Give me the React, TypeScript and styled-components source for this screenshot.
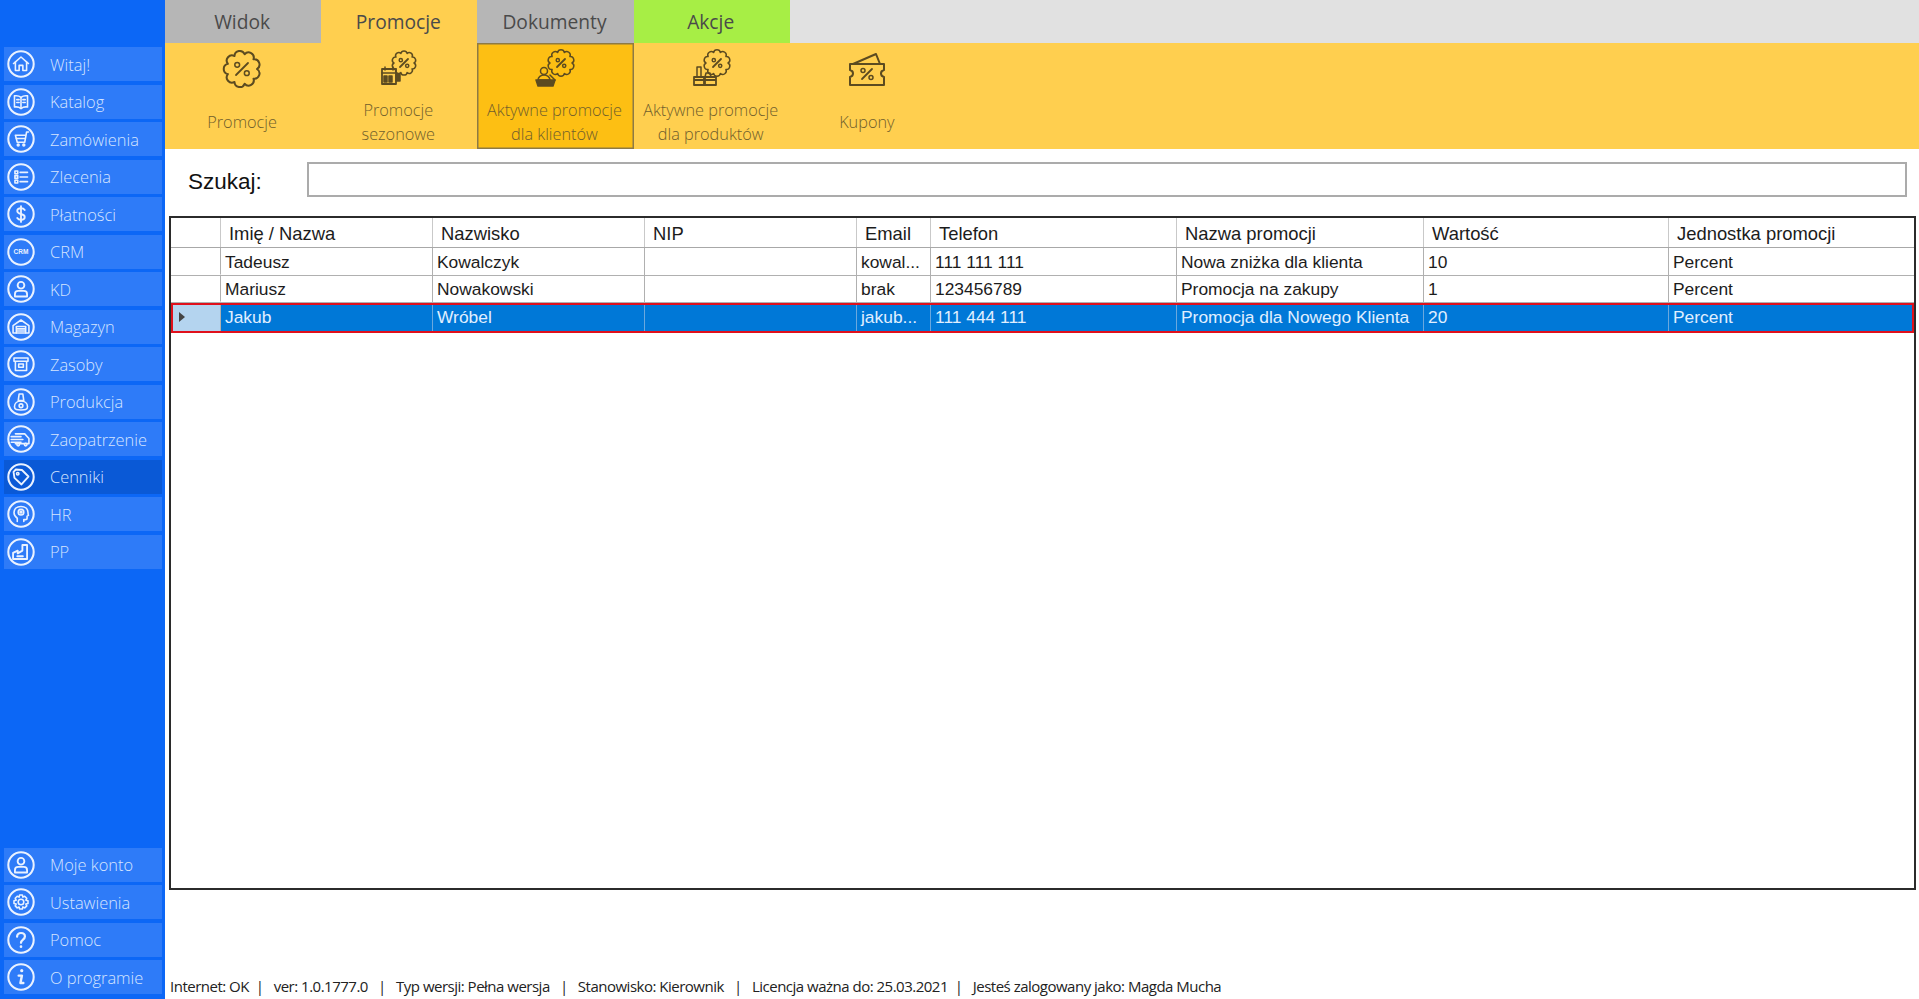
import React from 'react';
import styled, { createGlobalStyle } from 'styled-components';

const GlobalStyle = createGlobalStyle`
  html, body {
    margin: 0;
    padding: 0;
    background: #fff;
  }
  body {
    font-family: 'Open Sans', 'Noto Sans', sans-serif;
    overflow: hidden;
  }
`;

const Shell = styled.div`
  display: flex;
  width: 1919px;
  height: 999px;
`;

/* ---------- sidebar ---------- */

const Sidebar = styled.nav`
  width: 165px;
  flex: none;
  box-sizing: border-box;
  padding: 47px 3px 5px 4px;
  background: #0c67f6;
  display: flex;
  flex-direction: column;
  justify-content: space-between;
`;

const NavGroup = styled.div`
  display: flex;
  flex-direction: column;
  gap: 3.5px;
`;

const NavItem = styled.a<{ $active?: boolean }>`
  height: 34px;
  display: flex;
  align-items: center;
  gap: 8px;
  padding-left: 3px;
  background: ${p => (p.$active ? '#0a59d6' : '#2e7bf8')};
  color: #d6e5ff;
  font-size: 16.4px;
  font-weight: 300;
  white-space: nowrap;

  svg {
    flex: none;
    width: 28px;
    height: 28px;
  }
`;

const NavLabel = styled.span`
  margin-left: 7px;
`;

const round = {
  fill: 'none',
  stroke: '#eaf2ff',
  strokeWidth: 1.7,
  strokeLinecap: 'round',
  strokeLinejoin: 'round',
} as const;

const NavIcon: React.FC<{ children: React.ReactNode }> = ({ children }) => (
  <svg viewBox="0 0 30 30">
    <circle cx="15" cy="15" r="13.6" fill="none" stroke="#eaf2ff" strokeWidth="2.2" />
    <g {...round}>{children}</g>
  </svg>
);

const navIcons: Record<string, React.ReactNode> = {
  home: (
    <>
      <path d="M7 14.5 15 7.5l8 7" />
      <path d="M9 13v9h4v-5.5h4V22h4v-9" />
    </>
  ),
  book: (
    <>
      <path d="M15 10c-2-1.6-4.5-2-7-1.6v12c2.5-.4 5 0 7 1.6 2-1.6 4.5-2 7-1.6v-12c-2.5-.4-5 0-7 1.6Z" />
      <path d="M15 10v12M10.5 12.5h2.5M10.5 15.5h2.5M17 12.5h2.5M17 15.5h2.5" />
    </>
  ),
  cart: (
    <>
      <path d="M23 7.5h-2l-2 11h-8L9 11h11" />
      <path d="M10 14.5h9.5" />
      <circle cx="12" cy="21.5" r="1" />
      <circle cx="18" cy="21.5" r="1" />
    </>
  ),
  list: (
    <>
      <rect x="8.5" y="8.5" width="3" height="3" />
      <rect x="8.5" y="13.5" width="3" height="3" />
      <rect x="8.5" y="18.5" width="3" height="3" />
      <path d="M14 10h8M14 15h8M14 20h8" />
    </>
  ),
  dollar: (
    <>
      <path d="M19 10.8c-.8-1.3-2.2-2-4-2-2.4 0-4 1.2-4 3s1.6 2.6 4 3.2 4 1.4 4 3.2-1.6 3-4 3c-1.8 0-3.2-.7-4-2" strokeWidth="2" />
      <path d="M15 6.5v17" strokeWidth="2" />
    </>
  ),
  user: (
    <>
      <circle cx="15" cy="11" r="3.6" strokeWidth="2" />
      <path d="M8.5 23v-2.5c0-2 1.5-3.5 3.5-3.5h6c2 0 3.5 1.5 3.5 3.5V23Z" strokeWidth="2" />
    </>
  ),
  warehouse: (
    <>
      <path d="M6.5 13.5 15 7.5l8.5 6v8h-17Z" />
      <path d="M10 21.5v-7h10v7M10 17h10M10 19.3h10" />
    </>
  ),
  archive: (
    <>
      <path d="M7.5 8.5h15V12h-15ZM9 12v10h12V12" />
      <path d="M12.5 15h5v3.5h-5Z" />
    </>
  ),
  machine: (
    <>
      <path d="M13 6.5h4l1 7h-6Z" />
      <path d="M8 20c0-3.5 3-6 7-6s7 2.5 7 6-3 3.5-7 3.5-7 0-7-3.5Z" />
      <circle cx="15" cy="19" r="2" />
    </>
  ),
  truck: (
    <>
      <path d="M9 9.5h10l4.5 5V20H9" />
      <path d="M4.5 12.5H15M4.5 15.5H17M4.5 18.5H15" />
      <circle cx="12" cy="21" r="1.4" />
      <circle cx="20" cy="21" r="1.4" />
    </>
  ),
  tag: (
    <>
      <path d="M7 9.5 9.5 7l6.5.5 7 7-7.5 8.5-7.5-7Z" strokeWidth="2" />
      <circle cx="11.5" cy="11.5" r="1.3" />
    </>
  ),
  head: (
    <>
      <path d="M11 23v-3.5c-2.5-1.5-3.5-3.5-3.5-6 0-4 3-6.5 7.5-6.5s7.5 2.5 7.5 6.5c0 1 0 2 .5 3l-1.5.8v2.2c0 1-.8 1.5-2 1.5H18v2" />
      <circle cx="15" cy="13" r="3" />
      <circle cx="15" cy="13" r="1" />
    </>
  ),
  factory: (
    <>
      <path d="M6.5 22.5V16l5-2.5v3l5-3v-6h5v15Z" strokeWidth="2" />
      <path d="M11 19.5h6" strokeWidth="2" />
    </>
  ),
  gear: (
    <>
      <circle cx="15" cy="15" r="3" />
      <path d="M13.5 7.5h3l.5 2.3 2-.9 2.2 2.1-1 2 2.3.6v3l-2.3.6 1 2-2.2 2.1-2-1-.5 2.2h-3l-.6-2.2-2 1-2.1-2.1 1-2-2.3-.6v-3l2.3-.6-1-2 2.1-2.1 2 .9Z" />
    </>
  ),
  help: (
    <>
      <path d="M10.8 11.5c0-2.5 1.8-4 4.2-4s4.2 1.5 4.2 3.7c0 3.3-4.2 3.3-4.2 6.8" strokeWidth="2.4" />
      <path d="M15 22v.3" strokeWidth="2.8" />
    </>
  ),
  info: (
    <>
      <path d="M15.8 8v.3" strokeWidth="3.4" />
      <path d="M12.5 13.5H16l-1.6 8h3.1" strokeWidth="2.6" />
    </>
  ),
};

const CrmText = styled.text`
  font-family: 'Liberation Sans', sans-serif;
  font-size: 7px;
  font-weight: 700;
  fill: #eaf2ff;
  stroke: none;
  text-anchor: middle;
`;

const topNav: [string, React.ReactNode, boolean?][] = [
  ['Witaj!', navIcons.home],
  ['Katalog', navIcons.book],
  ['Zamówienia', navIcons.cart],
  ['Zlecenia', navIcons.list],
  ['Płatności', navIcons.dollar],
  ['CRM', <CrmText key="crm" x="15" y="17.5">CRM</CrmText>],
  ['KD', navIcons.user],
  ['Magazyn', navIcons.warehouse],
  ['Zasoby', navIcons.archive],
  ['Produkcja', navIcons.machine],
  ['Zaopatrzenie', navIcons.truck],
  ['Cenniki', navIcons.tag, true],
  ['HR', navIcons.head],
  ['PP', navIcons.factory],
];

const bottomNav: [string, React.ReactNode][] = [
  ['Moje konto', navIcons.user],
  ['Ustawienia', navIcons.gear],
  ['Pomoc', navIcons.help],
  ['O programie', navIcons.info],
];

/* ---------- tabs + ribbon ---------- */

const Main = styled.main`
  flex: 1;
  min-width: 0;
  display: flex;
  flex-direction: column;
`;

const TabBar = styled.div`
  height: 43px;
  flex: none;
  display: flex;
  background: #e1e1e1;
`;

const tabColors = {
  idle: '#b6b6b6',
  open: '#ffcf4f',
  action: '#a7ee45',
};

const Tab = styled.div<{ $kind: keyof typeof tabColors }>`
  width: 156.2px;
  display: flex;
  align-items: center;
  justify-content: center;
  background: ${p => tabColors[p.$kind]};
  color: #4a4a4a;
  font-size: 19.2px;
  padding-right: 2px;
  box-sizing: border-box;
`;

const Ribbon = styled.div`
  height: 106px;
  flex: none;
  display: flex;
  background: #ffcf4f;
`;

const RibbonButton = styled.div<{ $active?: boolean }>`
  width: 156.2px;
  box-sizing: border-box;
  display: flex;
  flex-direction: column;
  align-items: center;
  padding-right: 2px;
  background: ${p => (p.$active ? '#fdbf13' : 'transparent')};
  box-shadow: ${p => (p.$active ? 'inset 0 0 0 1.5px #8d7a45' : 'none')};
`;

const RibbonIcon = styled.div`
  height: 55px;
  flex: none;
  box-sizing: border-box;
  padding-top: 4px;

  svg {
    display: block;
    width: 48px;
    height: 48px;
  }
`;

const RibbonLabel = styled.div`
  flex: 1;
  display: flex;
  align-items: center;
  text-align: center;
  padding-bottom: 3px;
  color: #705e2c;
  font-size: 16.3px;
  font-weight: 300;
  line-height: 24px;
`;

const ink = {
  fill: 'none',
  stroke: '#5c4b20',
  strokeWidth: 1.5,
  strokeLinecap: 'round',
  strokeLinejoin: 'round',
} as const;

// scalloped badge outline used by the promo icons
const scallop = (cx: number, cy: number, r: number, bumps = 10) => {
  const pt = (i: number) => {
    const a = (i / bumps) * Math.PI * 2;
    return `${(cx + Math.cos(a) * r).toFixed(2)} ${(cy + Math.sin(a) * r).toFixed(2)}`;
  };
  const arc = (r * Math.PI) / bumps;
  let d = `M${pt(0)}`;
  for (let i = 1; i <= bumps; i++) d += `A${arc.toFixed(2)} ${arc.toFixed(2)} 0 0 1 ${pt(i)}`;
  return d + 'Z';
};

const Percent: React.FC<{ cx: number; cy: number; s: number }> = ({ cx, cy, s }) => (
  <>
    <path d={`M${cx - s} ${cy + s}L${cx + s} ${cy - s}`} strokeWidth="1.8" />
    <circle cx={cx - s * 0.8} cy={cy - s * 0.7} r={s * 0.4} strokeWidth="1.5" />
    <circle cx={cx + s * 0.8} cy={cy + s * 0.7} r={s * 0.4} strokeWidth="1.5" />
  </>
);

const RibbonSvg: React.FC<{ children: React.ReactNode }> = ({ children }) => (
  <svg viewBox="0 0 48 48">
    <g {...ink}>{children}</g>
  </svg>
);

const ribbonItems: { lines: string[]; icon: React.ReactNode; active?: boolean }[] = [
  {
    lines: ['Promocje'],
    icon: (
      <RibbonSvg>
        <path d={scallop(24, 22, 15, 9)} strokeWidth="2" />
        <Percent cx={24} cy={22} s={6} />
      </RibbonSvg>
    ),
  },
  {
    lines: ['Promocje', 'sezonowe'],
    icon: (
      <RibbonSvg>
        <path d={scallop(30, 16, 10)} />
        <Percent cx={30} cy={16} s={4} />
        <path d="M8 22h14v15H8Z" strokeWidth="1.8" />
        <path d="M8 26h14M11 20v3M19 20v3" />
        <path d="M10 29h3v6h-3ZM15 29h3v6h-3Z" fill="#5c4b20" />
        <path d="M22 27h4v7h-4Z" fill="#5c4b20" />
      </RibbonSvg>
    ),
  },
  {
    lines: ['Aktywne promocje', 'dla klientów'],
    active: true,
    icon: (
      <RibbonSvg>
        <path d={scallop(31, 16, 11)} />
        <Percent cx={31} cy={16} s={4} />
        <circle cx="14" cy="24" r="3.5" />
        <path d="M8 33c0-3 3-5 6-5s6 2 6 5Z" />
        <path d="M6 33h19l-2 6H8Z" fill="#5c4b20" />
        <path d="M20 28l5 5" />
      </RibbonSvg>
    ),
  },
  {
    lines: ['Aktywne promocje', 'dla produktów'],
    icon: (
      <RibbonSvg>
        <path d={scallop(30, 16, 11)} />
        <Percent cx={30} cy={16} s={4} />
        <path d="M7 30h10v8H7ZM18 30h11v8H18ZM7 33h22" strokeWidth="1.8" />
        <path d="M10 30V20h4v10M18 30l1-4h4l1 4" />
      </RibbonSvg>
    ),
  },
  {
    lines: ['Kupony'],
    icon: (
      <RibbonSvg>
        <path d="M7 17h34v6c-2 .5-3 1.5-3 3.5s1 3 3 3.5v8H7v-8c2-.5 3-1.5 3-3.5s-1-3-3-3.5Z" strokeWidth="2" />
        <path d="M10 17 33 7l4 10" strokeWidth="2" />
        <Percent cx={24} cy={27} s={5} />
      </RibbonSvg>
    ),
  },
];

/* ---------- search ---------- */

const SearchRow = styled.div`
  height: 67px;
  flex: none;
  box-sizing: border-box;
  padding: 13px 12px 19px 23px;
  display: flex;
  align-items: center;
`;

const SearchLabel = styled.label`
  width: 119px;
  flex: none;
  padding-top: 4px;
  color: #111;
  font-family: 'Liberation Sans', sans-serif;
  font-size: 22.5px;
`;

const SearchInput = styled.input`
  flex: 1;
  height: 35px;
  box-sizing: border-box;
  border: 2px solid #ababab;
  outline: none;
  background: #fff;
`;

/* ---------- grid ---------- */

const GridFrame = styled.div`
  height: 674px;
  flex: none;
  box-sizing: border-box;
  margin: 0 3px 0 4px;
  border: 2px solid #2b2b2b;
  font-family: 'Liberation Sans', sans-serif;
`;

const columns = '50px 212px 212px 212px 74px 246px 247px 245px 1fr';

const HeaderRow = styled.div`
  height: 30px;
  display: grid;
  grid-template-columns: ${columns};
  border-bottom: 1.5px solid #a8a8a8;
  box-sizing: border-box;
`;

const HeaderCell = styled.div`
  display: flex;
  align-items: center;
  padding: 2px 0 0 8px;
  border-right: 1.5px solid #c9c9c9;
  color: #1c1c1c;
  font-size: 18.4px;
  white-space: nowrap;
  overflow: hidden;

  &:last-child {
    border-right: none;
  }
`;

const DataRow = styled.div<{ $selected?: boolean }>`
  position: relative;
  height: 27.5px;
  display: grid;
  grid-template-columns: ${columns};
  box-sizing: border-box;
  border-bottom: ${p => (p.$selected ? 'none' : '1.5px solid #b0b0b0')};
  background: ${p => (p.$selected ? '#0078d7' : '#fff')};
  color: ${p => (p.$selected ? '#e0efff' : '#1c1c1c')};

  ${p =>
    p.$selected &&
    `&::after {
      content: '';
      position: absolute;
      left: 0;
      right: 0;
      top: 0;
      bottom: -2px;
      border: 2.5px solid #e0101c;
      pointer-events: none;
    }`}
`;

const RowHead = styled.div<{ $selected?: boolean }>`
  display: flex;
  align-items: center;
  padding-left: 8px;
  border-right: 1.5px solid #b0b0b0;
  background: ${p => (p.$selected ? '#b4d4ef' : '#fff')};
  border-bottom: ${p => (p.$selected ? 'none' : '1.5px solid #fff')};
`;

const RowArrow = styled.span`
  width: 0;
  height: 0;
  border-left: 6px solid #444;
  border-top: 5px solid transparent;
  border-bottom: 5px solid transparent;
`;

const DataCell = styled.div<{ $selected?: boolean }>`
  display: flex;
  align-items: center;
  padding: 2px 0 0 4px;
  border-right: 1.5px solid ${p => (p.$selected ? '#6aa8de' : '#b0b0b0')};
  font-size: 17.4px;
  white-space: nowrap;
  overflow: hidden;

  &:last-child {
    border-right: none;
  }
`;

const headers = ['', 'Imię / Nazwa', 'Nazwisko', 'NIP', 'Email', 'Telefon', 'Nazwa promocji', 'Wartość', 'Jednostka promocji'];

const rows = [
  ['Tadeusz', 'Kowalczyk', '', 'kowal...', '111 111 111', 'Nowa zniżka dla klienta', '10', 'Percent'],
  ['Mariusz', 'Nowakowski', '', 'brak', '123456789', 'Promocja na zakupy', '1', 'Percent'],
  ['Jakub', 'Wróbel', '', 'jakub...', '111 444 111', 'Promocja dla Nowego Klienta', '20', 'Percent'],
];

/* ---------- status ---------- */

const StatusBar = styled.footer`
  flex: 1;
  display: flex;
  align-items: flex-end;
  padding: 0 0 3px 5px;
  color: #222;
  font-family: 'Open Sans', sans-serif;
  font-size: 15px;
  letter-spacing: -0.5px;
  white-space: pre;
`;

const App: React.FC = () => (
  <Shell>
    <GlobalStyle />
    <Sidebar>
      <NavGroup>
        {topNav.map(([label, icon, active]) => (
          <NavItem key={label} $active={active}>
            <NavIcon>{icon}</NavIcon>
            <NavLabel>{label}</NavLabel>
          </NavItem>
        ))}
      </NavGroup>
      <NavGroup>
        {bottomNav.map(([label, icon]) => (
          <NavItem key={label}>
            <NavIcon>{icon}</NavIcon>
            <NavLabel>{label}</NavLabel>
          </NavItem>
        ))}
      </NavGroup>
    </Sidebar>
    <Main>
      <TabBar>
        <Tab $kind="idle">Widok</Tab>
        <Tab $kind="open">Promocje</Tab>
        <Tab $kind="idle">Dokumenty</Tab>
        <Tab $kind="action">Akcje</Tab>
      </TabBar>
      <Ribbon>
        {ribbonItems.map(item => (
          <RibbonButton key={item.lines.join(' ')} $active={item.active}>
            <RibbonIcon>{item.icon}</RibbonIcon>
            <RibbonLabel>
              <span>
                {item.lines.map(line => (
                  <div key={line}>{line}</div>
                ))}
              </span>
            </RibbonLabel>
          </RibbonButton>
        ))}
      </Ribbon>
      <SearchRow>
        <SearchLabel>Szukaj:</SearchLabel>
        <SearchInput />
      </SearchRow>
      <GridFrame>
        <HeaderRow>
          {headers.map(h => (
            <HeaderCell key={h}>{h}</HeaderCell>
          ))}
        </HeaderRow>
        {rows.map((row, i) => {
          const selected = i === rows.length - 1;
          return (
            <DataRow key={row[0]} $selected={selected}>
              <RowHead $selected={selected}>{selected && <RowArrow />}</RowHead>
              {row.map((cell, j) => (
                <DataCell key={j} $selected={selected}>
                  {cell}
                </DataCell>
              ))}
            </DataRow>
          );
        })}
      </GridFrame>
      <StatusBar>
        {'Internet: OK  |   ver: 1.0.1777.0   |   Typ wersji: Pełna wersja   |   Stanowisko: Kierownik   |   Licencja ważna do: 25.03.2021  |   Jesteś zalogowany jako: Magda Mucha'}
      </StatusBar>
    </Main>
  </Shell>
);

export default App;
